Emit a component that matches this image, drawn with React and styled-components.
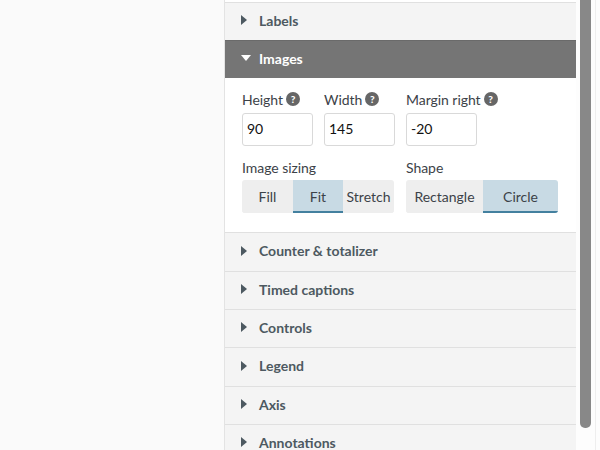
import React from 'react'
import styled, { createGlobalStyle } from 'styled-components'

const Global = createGlobalStyle`
    html, body {
        margin: 0;
        padding: 0;
        width: 600px;
        height: 450px;
        overflow: hidden;
        background: #fafafa;
    }
    * { box-sizing: border-box; }
`
const Page = styled.div`
    display: flex;
    width: 600px;
    height: 450px;
    overflow: hidden;
    font-family: "Lato", "Liberation Sans", sans-serif;
    color: #333;
`
const Preview = styled.div`
    width: 224px;
    background: #fafafa;
`
const Panel = styled.div`
    width: 352px;
    height: 450px;
    overflow: hidden;
    padding-top: 2px;
    background: #fff;
    border-left: 1px solid #e3e3e3;
`
const Section = styled.div`
    height: ${p => p.$h}px;
    padding: 0 0 3px 16px;
    display: flex;
    align-items: center;
    gap: ${p => p.$open ? 8 : 12}px;
    background: ${p => p.$open ? '#757575' : '#f4f4f4'};
    border-top: 1px solid ${p => p.$open ? '#6a6a6a' : '#e0e0e0'};
    color: ${p => p.$open ? '#fff' : '#4d5961'};
    font-size: 14px;
    font-weight: 700;
`
const Caret = styled.svg`
    width: ${p => p.$open ? 10 : 6}px;
    height: ${p => p.$open ? 6 : 10}px;
    fill: currentColor;
    flex: none;
`
const Body = styled.div`
    padding: 12px 17px 19px;
`
const Row = styled.div`
    display: flex;
    gap: ${p => p.$gap}px;
    margin-bottom: ${p => p.$mb || 0}px;
`
const Field = styled.div`
    display: flex;
    flex-direction: column;
    gap: ${p => p.$gap}px;
`
const Label = styled.label`
    display: flex;
    align-items: center;
    gap: 3px;
    height: 18px;
    font-size: 14px;
    letter-spacing: -0.05px;
    color: #3c4248;
`
const Help = styled.span`
    width: 14px;
    height: 14px;
    border-radius: 50%;
    background: #666;
    color: #fff;
    font-size: 10px;
    font-weight: 900;
    line-height: 14px;
    text-align: center;
`
const Input = styled.input`
    width: 71px;
    height: 33px;
    padding: 0 4px 3px;
    border: 1px solid #d9d9d9;
    border-radius: 3px;
    font-family: inherit;
    font-size: 14px;
    color: #111;
    background: #fff;
`
const Toggle = styled.div`
    display: flex;
    border-radius: 3px;
    overflow: hidden;
`
const ToggleButton = styled.div`
    width: ${p => p.$w}px;
    height: 33px;
    padding-top: 1px;
    display: flex;
    align-items: center;
    justify-content: center;
    font-size: 14px;
    color: #3c4248;
    background: ${p => p.$on ? '#c8dae4' : '#eeeeee'};
    border-bottom: 2px solid ${p => p.$on ? '#43809f' : '#eeeeee'};
`
const Track = styled.div`
    width: 24px;
    height: 450px;
    background: #fdfdfd;
    padding-left: 4px;
    display: flex;
`
const Thumb = styled.div`
    width: 11px;
    height: 428px;
    background: #888;
    border-radius: 0 0 5px 5px;
`
const Edge = styled.div`
    width: 1px;
    height: 450px;
    margin-left: 4px;
    background: #eeeeee;
`

function Closed({ title, h }){
    return(
        <Section $h={h}>
            <Caret viewBox="0 0 6 10"><path d="M0 0 L6 5 L0 10 Z" /></Caret>
            {title}
        </Section>
    )
}

export default function App(){
    return(
        <Page>
            <Global />
            <Preview />
            <Panel>
                <Closed title="Labels" h={38} />
                <Section $open $h={38}>
                    <Caret $open viewBox="0 0 10 6"><path d="M0 0 L10 0 L5 6 Z" /></Caret>
                    Images
                </Section>
                <Body>
                    <Row $gap={11} $mb={12}>
                        <Field $gap={5}>
                            <Label>Height <Help>?</Help></Label>
                            <Input defaultValue="90" />
                        </Field>
                        <Field $gap={5}>
                            <Label>Width <Help>?</Help></Label>
                            <Input defaultValue="145" />
                        </Field>
                        <Field $gap={5}>
                            <Label>Margin right <Help>?</Help></Label>
                            <Input defaultValue="-20" />
                        </Field>
                    </Row>
                    <Row $gap={12}>
                        <Field $gap={4}>
                            <Label>Image sizing</Label>
                            <Toggle>
                                <ToggleButton $w={51}>Fill</ToggleButton>
                                <ToggleButton $w={50} $on>Fit</ToggleButton>
                                <ToggleButton $w={51}>Stretch</ToggleButton>
                            </Toggle>
                        </Field>
                        <Field $gap={4}>
                            <Label>Shape</Label>
                            <Toggle>
                                <ToggleButton $w={77}>Rectangle</ToggleButton>
                                <ToggleButton $w={75} $on>Circle</ToggleButton>
                            </Toggle>
                        </Field>
                    </Row>
                </Body>
                <Closed title="Counter & totalizer" h={39} />
                <Closed title="Timed captions" h={38} />
                <Closed title="Controls" h={38} />
                <Closed title="Legend" h={39} />
                <Closed title="Axis" h={38} />
                <Closed title="Annotations" h={38} />
            </Panel>
            <Track>
                <Thumb />
                <Edge />
            </Track>
        </Page>
    )
}
